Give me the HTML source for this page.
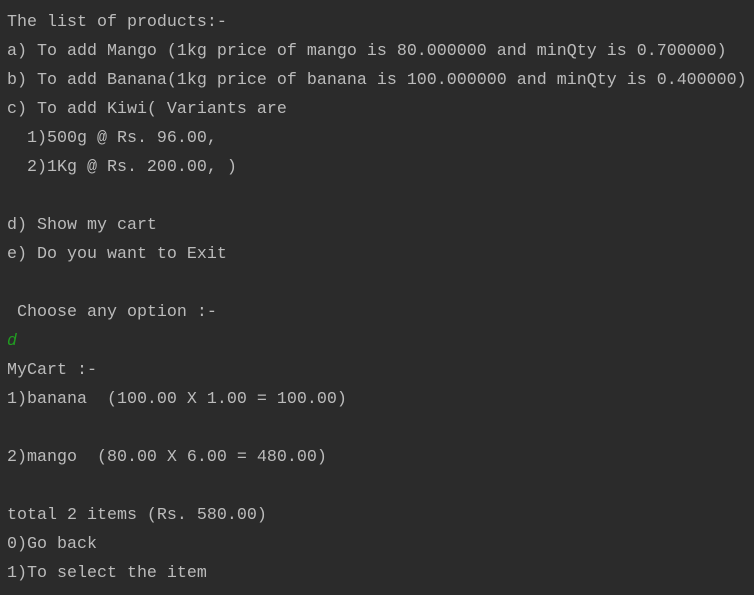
<!DOCTYPE html>
<html><head><style>
html,body{margin:0;padding:0;background:#2b2b2b;width:754px;height:595px;overflow:hidden}
pre{margin:0;position:absolute;left:7px;top:8px;font-family:"Liberation Mono",monospace;font-size:16.67px;line-height:29px;color:#bbbbbb;white-space:pre}
.g{color:#219c21;font-style:italic}
</style></head><body><pre>The list of products:-
a) To add Mango (1kg price of mango is 80.000000 and minQty is 0.700000)
b) To add Banana(1kg price of banana is 100.000000 and minQty is 0.400000)
c) To add Kiwi( Variants are
  1)500g @ Rs. 96.00,
  2)1Kg @ Rs. 200.00, )

d) Show my cart
e) Do you want to Exit

 Choose any option :-
<span class="g">d</span>
MyCart :-
1)banana  (100.00 X 1.00 = 100.00)

2)mango  (80.00 X 6.00 = 480.00)

total 2 items (Rs. 580.00)
0)Go back
1)To select the item</pre></body></html>
